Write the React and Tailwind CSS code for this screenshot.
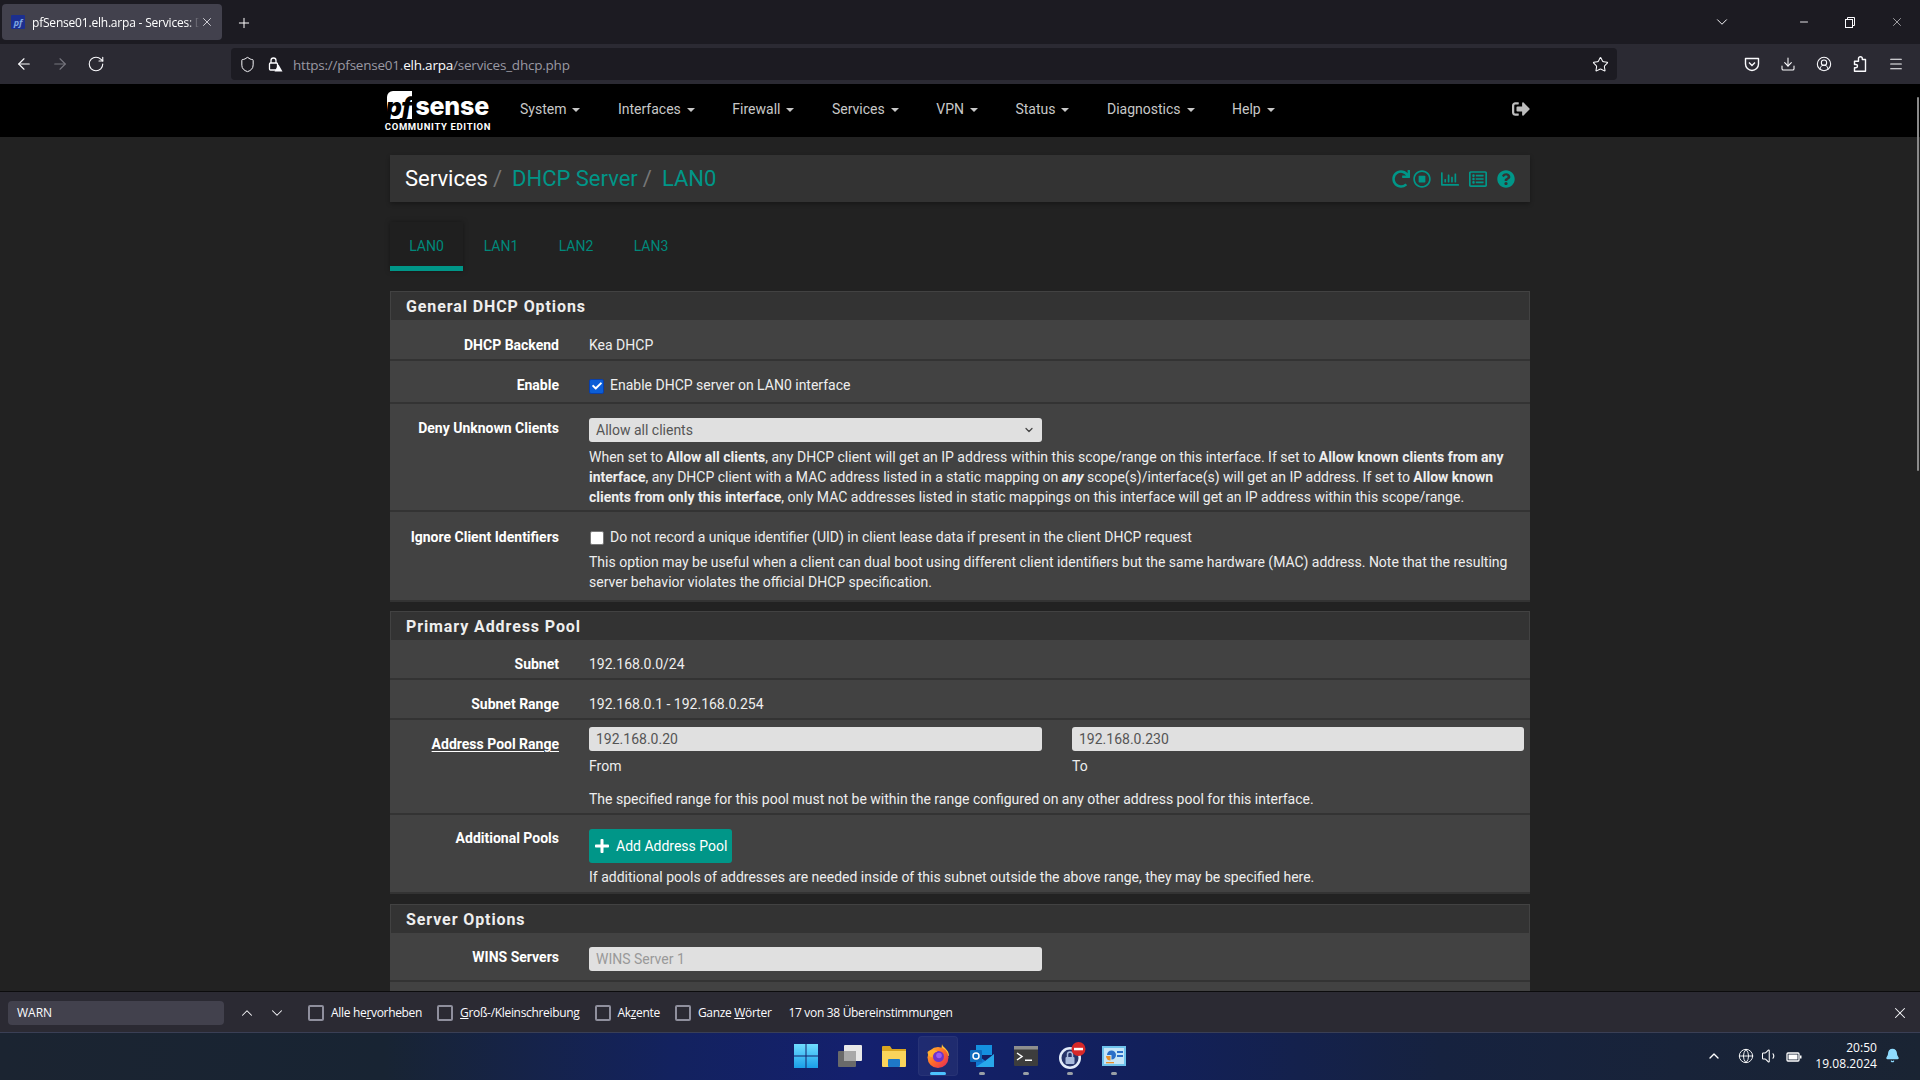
import React from "react";
import { FaRedo, FaRegStopCircle, FaRegChartBar, FaRegListAlt, FaQuestionCircle, FaSignOutAlt, FaPlus, FaCheck } from "react-icons/fa";
import { ArrowLeft, ArrowRight, RotateCw, Shield, Star, Download, CircleUserRound, Menu, X, Plus, ChevronDown, ChevronUp, Minus, Volume1, Bell, Globe } from "lucide-react";

const NAV = ["System", "Interfaces", "Firewall", "Services", "VPN", "Status", "Diagnostics", "Help"];

function Caret() {
  return <span className="inline-block ml-[6px] w-0 h-0 border-x-4 border-t-4 border-x-transparent border-t-current align-middle" />;
}

function Section({ title, className = "" }) {
  return (
    <div className={"h-[30px] flex items-center pl-[15px] pt-[2px] bg-[#333333] border border-[#424242] text-[16px] leading-5 font-bold tracking-[0.9px] text-[#eeeeee] " + className}>
      {title}
    </div>
  );
}

function Row({ label, className = "", pt = "", children, underline }) {
  return (
    <div className={"flex bg-[#424242] border-b-2 border-[#333333] text-[14px] leading-5 text-[#eeeeee] " + className}>
      <div className={"w-[169px] shrink-0 text-right font-bold text-white " + pt}>
        <span className={underline ? "underline underline-offset-2" : ""}>{label}</span>
      </div>
      <div className={"ml-[30px] w-[935px] " + pt}>{children}</div>
    </div>
  );
}

function Field({ value, placeholder, className = "w-[453px]" }) {
  return (
    <div className={"h-[24px] rounded-[3px] bg-[#e0e0e0] px-[7px] flex items-center text-[14px] " + className + " " + (placeholder ? "text-[#999999]" : "text-[#555555]")}>
      {value || placeholder}
    </div>
  );
}

function FindCheck({ children }) {
  return (
    <div className="flex items-center gap-[7px]">
      <span className="w-[16px] h-[16px] rounded-[2px] border-2 border-[#8f8f9d]" />
      <span>{children}</span>
    </div>
  );
}

function TaskIcon({ active, dot, children }) {
  return (
    <div className="relative w-[44px] h-[44px] flex items-center justify-center">
      {active && <div className="absolute inset-x-[2px] top-[2px] bottom-[2px] rounded-[4px] bg-[#ffffff0d] border border-[#ffffff0a]" />}
      <div className="relative">{children}</div>
      {active && <div className="absolute bottom-[3px] left-[14px] w-[16px] h-[3px] rounded-full bg-[#4cc2ff]" />}
      {dot && <div className="absolute bottom-[3px] left-[19px] w-[6px] h-[3px] rounded-full bg-[#9aa0a6]" />}
    </div>
  );
}

function Logo() {
  return (
    <div className="w-[106px] h-[40px] ml-[-5px] flex flex-col items-center">
      <div className="flex items-center h-[28px] w-[102px]">
        <div className="w-[28px] h-[28px] bg-white rounded-tl-[6px] flex items-end justify-center overflow-hidden">
          <span className="text-black italic font-black text-[25px] leading-[24px] tracking-[-0.5px] font-['Inter',sans-serif] pr-[2px]">pf</span>
        </div>
        <span className="ml-[3px] mt-[3px] text-white font-extrabold text-[25px] leading-[28px] tracking-[-0.2px] font-['Inter',sans-serif]">sense</span>
      </div>
      <div className="mt-[3px] text-[9.5px] leading-[10px] font-bold tracking-[0.65px] text-white font-['Roboto',sans-serif] whitespace-nowrap">COMMUNITY EDITION</div>
    </div>
  );
}

export default function App() {
  return (
    <div className="w-[1920px] h-[1080px] overflow-hidden flex flex-col bg-[#222222] font-['Roboto',sans-serif]">
      {/* Tab strip */}
      <div className="h-[44px] shrink-0 bg-[#1c1b22] flex items-start font-['Open_Sans',sans-serif] text-white relative">
        <div className="mt-[4px] ml-[2px] w-[220px] h-[36px] rounded-[4px] bg-[#42414d] flex items-center pl-[9px] text-[12px]">
          <div className="w-[14px] h-[14px] bg-[#1c2f8f] rounded-[1px] flex items-center justify-center text-[9px] italic font-bold text-[#7fa7e0] leading-none">pf</div>
          <div className="ml-[7px] pt-[1px] w-[167px] overflow-hidden whitespace-nowrap tracking-[-0.2px] [mask-image:linear-gradient(to_right,black_93%,transparent)]">pfSense01.elh.arpa - Services: D</div>
          <X size={14} strokeWidth={1.5} className="ml-[1px] text-[#e0e0e6]" />
        </div>
        <Plus size={16} strokeWidth={1.5} className="ml-[14px] mt-[15px]" />
        <div className="absolute right-0 top-0 h-[44px] flex items-center text-[#fbfbfe]">
          <ChevronDown size={18} strokeWidth={1.3} className="mr-[67px]" />
          <Minus size={12} strokeWidth={1.8} className="mr-[34px]" />
          <svg width="12" height="12" viewBox="0 0 12 12" fill="none" stroke="currentColor" className="mr-[34px]"><rect x="1.5" y="3.5" width="7" height="8" /><path d="M3.5 3.5v-2h7v8h-2" /></svg>
          <X size={14} strokeWidth={1} className="mr-[16px]" />
        </div>
      </div>

      {/* Toolbar */}
      <div className="h-[40px] shrink-0 bg-[#2b2a33] flex items-center text-[#fbfbfe] relative">
        <div className="w-[231px] flex items-center pl-[15px] gap-[18px]">
          <ArrowLeft size={18} strokeWidth={1.5} />
          <ArrowRight size={18} strokeWidth={1.5} className="text-[#77767f]" />
          <RotateCw size={18} strokeWidth={1.5} />
        </div>
        <div className="w-[1386px] h-[32px] rounded-[4px] bg-[#1c1b22] flex items-center pl-[8px] text-[14px] font-['Open_Sans',sans-serif]">
          <Shield size={17} strokeWidth={1.4} />
          <svg width="16" height="16" viewBox="0 0 16 16" className="ml-[11px]" fill="none" stroke="#fbfbfe" strokeWidth="1.3">
            <rect x="2.5" y="7" width="8" height="7" rx="1" />
            <path d="M4 7V4.5a2.5 2.5 0 0 1 5 0V7" />
            <path d="M11.5 8.5l4 7h-8z" fill="#fbfbfe" stroke="none" />
          </svg>
          <div className="ml-[10px] pt-[2px] tracking-[-0.22px] text-[#9a99a3] text-[13.5px]">
            https://pfsense01.<span className="text-[#fbfbfe]">elh.arpa</span>/services_dhcp.php
          </div>
          <Star size={17} strokeWidth={1.5} className="ml-auto mr-[8px]" />
        </div>
        <div className="ml-[127px] flex items-center gap-[20px]">
          <svg width="16" height="16" viewBox="0 0 16 16" fill="none" stroke="currentColor" strokeWidth="1.4"><path d="M1.5 2.5h13v5.5a6.5 6.5 0 0 1-13 0z" strokeLinejoin="round" /><path d="M5 6.5l3 3 3-3" /></svg>
          <Download size={16} strokeWidth={1.6} />
          <CircleUserRound size={16} strokeWidth={1.6} />
          <svg width="16" height="16" viewBox="0 0 16 16" fill="none" stroke="currentColor" strokeWidth="1.4" strokeLinejoin="round"><path d="M6.5 3.5V2.6a1.9 1.9 0 0 1 3.8 0v.9h3.2v11.7H2.5v-3.5h1.4a1.6 1.6 0 0 0 0-3.2H2.5V5.2h4z" /></svg>
          <Menu size={16} strokeWidth={1.6} />
        </div>
      </div>

      {/* Page */}
      <div className="flex-1 min-h-0 relative overflow-hidden">
        <div className="h-[53px] bg-black">
          <div className="w-[1140px] mx-auto h-full flex items-center relative">
            <Logo />
            <nav className="ml-[22px] -mt-[2px] flex items-center gap-[23.5px] text-[14px] text-[#c8c8c8] whitespace-nowrap">
              {NAV.map((n) => (
                <span key={n} className="px-[7px]">{n}<Caret /></span>
              ))}
            </nav>
            <FaSignOutAlt size={18} className="ml-auto -mt-[4px] text-[#bdbdbd]" />
          </div>
        </div>

        <div className="w-[1140px] mx-auto">
          <div className="mt-[18px] h-[47px] bg-[#333333] flex items-center pl-[15px] pr-[15px] shadow-[0_2px_4px_rgba(0,0,0,0.3)] text-[22px] text-[#009688]">
            <span className="text-white">Services</span>
            <span className="text-[#777777] ml-[5px] mr-[10px]">/</span>
            <span>DHCP Server</span>
            <span className="text-[#777777] ml-[5px] mr-[10px]">/</span>
            <span>LAN0</span>
            <div className="ml-auto flex items-center">
              <FaRedo size={18} className="mr-[3px]" />
              <FaRegStopCircle size={18} className="mr-[10px]" />
              <FaRegChartBar size={18} className="mr-[10px]" />
              <FaRegListAlt size={18} className="mr-[10px]" />
              <FaQuestionCircle size={18} />
            </div>
          </div>

          <div className="mt-[20px] h-[49px] flex text-[14px] text-[#00897b]">
            <div className="w-[73px] bg-[#1f1f1f] border-b-[5px] border-[#009688] flex items-center justify-center shadow-[0_0_5px_rgba(0,0,0,0.35)] pt-[4px]">LAN0</div>
            <div className="w-[74px] ml-[1px] flex items-center justify-center pb-[1px]">LAN1</div>
            <div className="w-[74px] ml-[1px] flex items-center justify-center pb-[1px]">LAN2</div>
            <div className="w-[74px] ml-[1px] flex items-center justify-center pb-[1px]">LAN3</div>
          </div>

          <Section title="General DHCP Options" className="mt-[20px]" />
          <Row label="DHCP Backend" className="h-[40px]" pt="pt-[14px]">Kea DHCP</Row>
          <Row label="Enable" className="h-[43px]" pt="pt-[14px]">
            <div className="flex items-center">
              <span className="w-[15px] h-[15px] rounded-[2px] bg-[#0b5ed7] border border-[#0a3fa8] flex items-center justify-center text-white mt-[2px]"><FaCheck size={10} /></span>
              <span className="ml-[6px]">Enable DHCP server on LAN0 interface</span>
            </div>
          </Row>
          <Row label="Deny Unknown Clients" className="h-[108px]" pt="pt-[14px]">
            <div className="h-[24px] w-[453px] rounded-[3px] bg-[#e0e0e0] px-[7px] flex items-center justify-between text-[#555555]">
              Allow all clients
              <ChevronDown size={12} strokeWidth={2.5} className="text-[#444444]" />
            </div>
            <p className="mt-[5px]">
              When set to <b>Allow all clients</b>, any DHCP client will get an IP address within this scope/range on this interface. If set to <b>Allow known clients from any interface</b>, any DHCP client with a MAC address listed in a static mapping on <b><i>any</i></b> scope(s)/interface(s) will get an IP address. If set to <b>Allow known clients from only this interface</b>, only MAC addresses listed in static mappings on this interface will get an IP address within this scope/range.
            </p>
          </Row>
          <Row label="Ignore Client Identifiers" className="h-[90px] border-b-0" pt="pt-[15px]">
            <div className="flex items-center">
              <span className="w-[14px] h-[14px] rounded-[2px] bg-white border border-[#777777] mt-[2px] ml-[1px]" />
              <span className="ml-[6px]">Do not record a unique identifier (UID) in client lease data if present in the client DHCP request</span>
            </div>
            <p className="mt-[5px]">This option may be useful when a client can dual boot using different client identifiers but the same hardware (MAC) address. Note that the resulting server behavior violates the official DHCP specification.</p>
          </Row>

          <Section title="Primary Address Pool" className="mt-[9px]" />
          <Row label="Subnet" className="h-[39px]" pt="pt-[13px]">192.168.0.0/24</Row>
          <Row label="Subnet Range" className="h-[40px]" pt="pt-[14px]">192.168.0.1 - 192.168.0.254</Row>
          <Row label="Address Pool Range" className="h-[95px]" pt="pt-[14px]" underline>
            <div className="-mt-[7px] flex gap-[30px]">
              <div>
                <Field value="192.168.0.20" />
                <div className="mt-[5px]">From</div>
              </div>
              <div>
                <Field value="192.168.0.230" className="w-[452px]" />
                <div className="mt-[5px]">To</div>
              </div>
            </div>
            <p className="mt-[13px]">The specified range for this pool must not be within the range configured on any other address pool for this interface.</p>
          </Row>
          <Row label="Additional Pools" className="h-[79px] border-b-0" pt="pt-[13px]">
            <div className="mt-[1px] h-[34px] w-[143px] rounded-[3px] bg-[#009688] flex items-center text-white pl-[5px]">
              <FaPlus size={16} />
              <span className="ml-[6px]">Add Address Pool</span>
            </div>
            <p className="mt-[4px]">If additional pools of addresses are needed inside of this subnet outside the above range, they may be specified here.</p>
          </Row>

          <Section title="Server Options" className="mt-[10px]" />
          <Row label="WINS Servers" className="h-[48px]" pt="pt-[13px]">
            <Field placeholder="WINS Server 1" />
          </Row>
          <div className="h-[20px] bg-[#424242]" />
        </div>

        <div className="absolute right-[1px] top-[13px] w-[2px] h-[374px] bg-[#8a8a8a] rounded-full" />
      </div>

      {/* Find bar */}
      <div className="h-[41px] shrink-0 bg-[#2b2a33] border-t border-[#0c0c0d] pt-[1px] flex items-center text-[12px] text-[#fbfbfe] font-['Open_Sans',sans-serif] relative">
        <div className="ml-[8px] w-[216px] h-[24px] rounded-[4px] bg-[#42414d] flex items-center pl-[9px]">WARN</div>
        <ChevronUp size={18} strokeWidth={1.4} className="ml-[14px]" />
        <ChevronDown size={18} strokeWidth={1.4} className="ml-[12px]" />
        <div className="ml-[22px] flex items-center gap-[15px] tracking-[-0.32px]">
          <FindCheck>Alle he<u>r</u>vorheben</FindCheck>
          <FindCheck><u>G</u>roß-/Kleinschreibung</FindCheck>
          <FindCheck>Ak<u>z</u>ente</FindCheck>
          <FindCheck>Ganze <u>W</u>örter</FindCheck>
          <span className="ml-[2px]">17 von 38 Übereinstimmungen</span>
        </div>
        <X size={18} strokeWidth={1.4} className="ml-auto mr-[11px]" />
      </div>

      {/* Taskbar */}
      <div className="h-[48px] shrink-0 border-t border-[#3a3f55] pb-[2px] bg-[linear-gradient(90deg,#1b2431_0%,#182433_20%,#13225f_35%,#14206e_45%,#12205a_60%,#16223f_75%,#1a2433_100%)] grid grid-cols-[1fr_auto_1fr] items-center text-white">
        <div />
        <div className="flex items-center">
          <TaskIcon>
            <svg width="24" height="24" viewBox="0 0 24 24"><defs><linearGradient id="w" x1="0" y1="0" x2="0" y2="1"><stop offset="0" stopColor="#6fdcff" /><stop offset="1" stopColor="#1a9fe8" /></linearGradient></defs><path fill="url(#w)" d="M0 0h11.5v11.5H0zM12.5 0H24v11.5H12.5zM0 12.5h11.5V24H0zM12.5 12.5H24V24H12.5z" /></svg>
          </TaskIcon>
          <TaskIcon>
            <svg width="24" height="22" viewBox="0 0 24 22"><rect x="6" y="0" width="18" height="16" rx="1" fill="#e8e8e8" /><rect x="0" y="6" width="18" height="16" rx="1" fill="#6a6a6a" /><rect x="6" y="6" width="12" height="10" fill="#a8a8a8" /></svg>
          </TaskIcon>
          <TaskIcon>
            <svg width="24" height="22" viewBox="0 0 24 22"><path d="M0 2a1 1 0 0 1 1-1h7l2 3h14v16a1 1 0 0 1-1 1H1a1 1 0 0 1-1-1z" fill="#d9a520" /><path d="M0 6h24v15a1 1 0 0 1-1 1H1a1 1 0 0 1-1-1z" fill="#fbd45b" /><rect x="6" y="14" width="12" height="8" rx="1" fill="#1e78c8" /></svg>
          </TaskIcon>
          <TaskIcon active>
            <svg width="24" height="24" viewBox="0 0 24 24"><defs><linearGradient id="ff" x1="0" y1="0" x2="1" y2="1"><stop offset="0" stopColor="#ffbd2e" /><stop offset="0.5" stopColor="#ff6a2a" /><stop offset="1" stopColor="#e3245c" /></linearGradient></defs><path d="M16 0c0 3 7 5 7 12l-8-3z" fill="#ffc233" /><circle cx="12" cy="13.5" r="10.5" fill="url(#ff)" /><circle cx="12.5" cy="12.5" r="5.5" fill="#6f35c9" /><circle cx="13" cy="11.5" r="2.8" fill="#9a5cf0" /><path d="M1.5 8c3-3 7-3 10-.5-3 .5-5 2.5-5 6-3-.5-5-2.5-5-5.5z" fill="#ffae2e" /></svg>
          </TaskIcon>
          <TaskIcon dot>
            <svg width="24" height="22" viewBox="0 0 24 22"><rect x="6" y="0" width="16" height="10" fill="#1490df" /><path d="M24 9v13H6V9l9 7z" fill="#28a8ea" /><path d="M6 9l9 7-9 6z" fill="#0f78d4" /><rect x="0" y="5" width="12" height="12" rx="1" fill="#0f6cbd" /><circle cx="6" cy="11" r="3" fill="none" stroke="white" strokeWidth="1.5" /></svg>
          </TaskIcon>
          <TaskIcon dot>
            <svg width="24" height="20" viewBox="0 0 24 20"><rect width="24" height="20" rx="1" fill="#3d3d3d" /><rect width="24" height="3.5" fill="#8e8e8e" /><path d="M3 7l5 3.5L3 14" fill="none" stroke="white" strokeWidth="1.5" /><rect x="11" y="13.5" width="7" height="1.5" fill="white" /></svg>
          </TaskIcon>
          <TaskIcon dot>
            <svg width="28" height="28" viewBox="0 0 28 28" className="ml-[4px]"><circle cx="12" cy="16" r="11" fill="#e3ecfa" /><circle cx="12" cy="16" r="8.5" fill="#27356a" /><rect x="7.5" y="15" width="9" height="7" rx="1" fill="#a9bbdc" /><path d="M9.5 15v-2.5a2.5 2.5 0 0 1 5 0V15" fill="none" stroke="#a9bbdc" strokeWidth="1.5" /><circle cx="20.5" cy="7" r="7" fill="#d72828" /><rect x="16" y="5.8" width="9" height="2.5" fill="white" /></svg>
          </TaskIcon>
          <TaskIcon dot>
            <svg width="24" height="20" viewBox="0 0 24 20"><rect width="24" height="20" fill="#6fc3ec" /><rect x="2" y="2" width="20" height="16" fill="#c7e6f7" /><path d="M5 9a4.5 4.5 0 1 1 4.5 4.5V9z" fill="#2a6fc7" /><path d="M4 10h4.5v4.5A4.5 4.5 0 0 1 4 10z" fill="#e8902a" /><rect x="4" y="16" width="8" height="1.3" fill="#e8902a" /><rect x="15" y="5" width="6" height="2" fill="#2a6fc7" /><rect x="15" y="9" width="6" height="2" fill="#2a6fc7" /></svg>
          </TaskIcon>
        </div>
        <div className="flex items-center justify-end h-full font-['Open_Sans',sans-serif]">
          <ChevronUp size={16} strokeWidth={2} />
          <Globe size={16} strokeWidth={1.4} className="ml-[16px]" />
          <Volume1 size={18} strokeWidth={1.4} className="ml-[7px]" />
          <svg width="16" height="16" viewBox="0 0 16 16" className="ml-[7px]" fill="none" stroke="white" strokeWidth="1.3"><rect x="1" y="5" width="12" height="8" rx="1" /><rect x="2.5" y="6.5" width="9" height="5" fill="white" stroke="none" /><rect x="14" y="7.5" width="1.5" height="3" fill="white" stroke="none" /></svg>
          <div className="w-[75px] text-right text-[12px] leading-[16px] tracking-[0.05px]">
            <div>20:50</div>
            <div>19.08.2024</div>
          </div>
          <Bell size={15} className="ml-[8px] mr-[20px] text-[#8fdcff]" fill="#8fdcff" />
        </div>
      </div>
    </div>
  );
}
